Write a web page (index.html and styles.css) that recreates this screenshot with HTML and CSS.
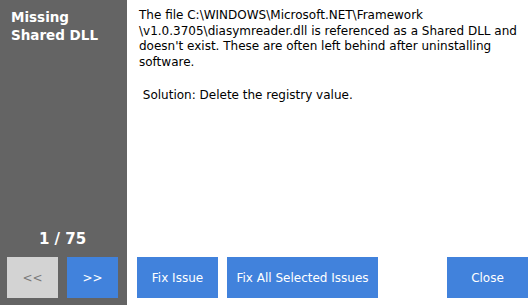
FILE: index.html
```html
<!DOCTYPE html>
<html lang="en">
<head>
    <meta charset="UTF-8">
    <title>Missing Shared DLL</title>
    <link rel="stylesheet" href="styles.css">
</head>
<body>
    <div class="window">
        <div class="sidebar">
            <div class="issueTitle">Missing<br>Shared DLL</div>
            <div class="counter">1 / 75</div>
            <div class="navButtons">
                <button class="navBtn prev">&lt;&lt;</button>
                <button class="navBtn next">&gt;&gt;</button>
            </div>
        </div>
        <div class="content">
            <div class="description">
                <p>The file C:\WINDOWS\Microsoft.NET\Framework<wbr>\v1.0.3705\diasymreader.dll is referenced as a Shared DLL and doesn't exist. These are often left behind after uninstalling software.</p>
                <p class="solution">&nbsp;Solution: Delete the registry value.</p>
            </div>
            <div class="actions">
                <button class="actBtn fixOne">Fix Issue</button>
                <button class="actBtn fixAll">Fix All Selected Issues</button>
                <button class="actBtn close">Close</button>
            </div>
        </div>
    </div>
</body>
</html>
```

FILE: styles.css
```css
* {
    margin: 0;
    padding: 0;
    box-sizing: border-box;
}

body {
    font-family: "DejaVu Sans", Verdana, sans-serif;
    background: #ffffff;
    width: 528px;
    height: 305px;
    overflow: hidden;
}

.window {
    display: flex;
    height: 305px;
}

.sidebar {
    width: 127px;
    background: #646464;
    display: flex;
    flex-direction: column;
    padding: 8px 9px 7px 7px;
}

.issueTitle {
    color: #ffffff;
    font-weight: bold;
    font-size: 13.5px;
    line-height: 18px;
    padding-left: 4px;
}

.counter {
    margin-top: auto;
    color: #ffffff;
    font-weight: bold;
    font-size: 15px;
    text-align: center;
    margin-bottom: 9px;
}

.navButtons {
    display: flex;
    gap: 9px;
}

button {
    border: none;
    font-family: inherit;
    font-size: 12px;
    height: 41px;
    color: #ffffff;
    background: #4182dc;
}

.navBtn {
    width: 51px;
}

.prev {
    background: #d3d3d3;
    color: #7a7a7a;
}

.content {
    flex: 1;
    display: flex;
    flex-direction: column;
    padding: 8px 0 7px 12px;
}

.description {
    font-size: 12px;
    line-height: 15.7px;
    color: #000000;
    padding-right: 2px;
}

.solution {
    margin-top: 17px;
}

.actions {
    margin-top: auto;
    display: flex;
    gap: 9px;
    margin-left: -2px;
}

.fixOne {
    width: 81px;
}

.fixAll {
    width: 151px;
}

.close {
    width: 81px;
    margin-left: auto;
}
```
